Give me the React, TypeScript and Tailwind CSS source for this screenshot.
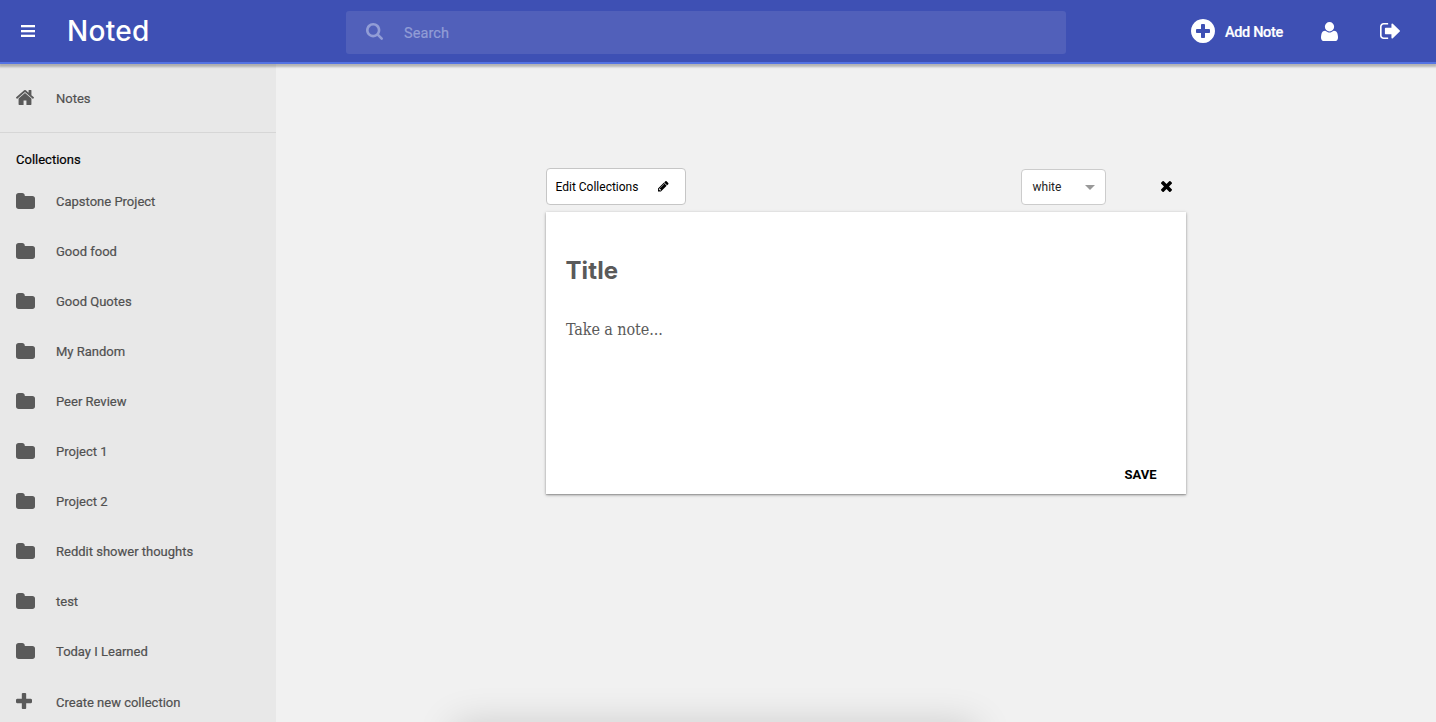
import React from 'react';

type IconProps = { box: string; d: string; className?: string };

function Icon({ box, d, className }: IconProps) {
  return (
    <svg viewBox={box} className={className} fill="currentColor" preserveAspectRatio="none" aria-hidden="true">
      <path d={d} />
    </svg>
  );
}

const icons = {
  home: {
    box: '89 253 1614 1283',
    d: 'M1472 992v480q0 26-19 45t-45 19h-384v-384h-256v384h-384q-26 0-45-19t-19-45v-480q0-1 .5-3t.5-3l575-474 575 474q1 2 1 6zm223-69l-62 74q-8 9-21 11h-3q-13 0-21-7l-692-577-692 577q-12 8-24 7-13-2-21-11l-62-74q-8-10-7-23.5t11-21.5l719-599q32-26 76-26t76 26l244 204v-195q0-14 9-23t23-9h192q14 0 23 9t9 23v408l219 182q10 8 11 21.5t-7 23.5z',
  },
  folder: {
    box: '64 128 1664 1408',
    d: 'M1728 608v704q0 92-66 158t-158 66h-1216q-92 0-158-66t-66-158v-960q0-92 66-158t158-66h320q92 0 158 66t66 158v32h672q92 0 158 66t66 158z',
  },
  plus: {
    box: '192 128 1408 1408',
    d: 'M1600 736v192q0 40-28 68t-68 28h-416v416q0 40-28 68t-68 28h-192q-40 0-68-28t-28-68v-416h-416q-40 0-68-28t-28-68v-192q0-40 28-68t68-28h416v-416q0-40 28-68t68-28h192q40 0 68 28t28 68v416h416q40 0 68 28t28 68z',
  },
  plusCircle: {
    box: '128 128 1536 1536',
    d: 'M1344 960v-128q0-26-19-45t-45-19h-256v-256q0-26-19-45t-45-19h-128q-26 0-45 19t-19 45v256h-256q-26 0-45 19t-19 45v128q0 26 19 45t45 19h256v256q0 26 19 45t45 19h128q26 0 45-19t19-45v-256h256q26 0 45-19t19-45zm320-64q0 209-103 385.5t-279.5 279.5-385.5 103-385.5-103-279.5-279.5-103-385.5 103-385.5 279.5-279.5 385.5-103 385.5 103 279.5 279.5 103 385.5z',
  },
  user: {
    box: '192 128 1408 1536',
    d: 'M1600 1405q0 120-73 189.5t-194 69.5h-874q-121 0-194-69.5t-73-189.5q0-53 3.5-103.5t14-109 26.5-108.5 43-97.5 62-81 85.5-53.5 111.5-20q9 0 42 21.5t74.5 48 108 48 133.5 21.5 133.5-21.5 108-48 74.5-48 42-21.5q61 0 111.5 20t85.5 53.5 62 81 43 97.5 26.5 108.5 14 109 3.5 103.5zm-320-893q0 159-112.5 271.5t-271.5 112.5-271.5-112.5-112.5-271.5 112.5-271.5 271.5-112.5 271.5 112.5 112.5 271.5z',
  },
  signOut: {
    box: '64 256 1568 1280',
    d: 'M704 1440q0 4 1 20t.5 26.5-3 23.5-10 19.5-20.5 6.5h-320q-119 0-203.5-84.5t-84.5-203.5v-704q0-119 84.5-203.5t203.5-84.5h320q13 0 22.5 9.5t9.5 22.5q0 4 1 20t.5 26.5-3 23.5-10 19.5-20.5 6.5h-320q-66 0-113 47t-47 113v704q0 66 47 113t113 47h312l11.5 1 11.5 3 8 5.5 7 9 2 13.5zm928-544q0 26-19 45l-544 544q-19 19-45 19t-45-19-19-45v-288h-448q-26 0-45-19t-19-45v-384q0-26 19-45t45-19h448v-288q0-26 19-45t45-19 45 19l544 544q19 19 19 45z',
  },
  search: {
    box: '64 128 1664 1664',
    d: 'M1216 832q0-185-131.5-316.5t-316.5-131.5-316.5 131.5-131.5 316.5 131.5 316.5 316.5 131.5 316.5-131.5 131.5-316.5zm512 832q0 52-38 90t-90 38q-54 0-90-38l-343-342q-179 124-399 124-143 0-273.5-55.5t-225-150-150-225-55.5-273.5 55.5-273.5 150-225 225-150 273.5-55.5 273.5 55.5 225 150 150 225 55.5 273.5q0 220-124 399l343 343q37 37 37 90z',
  },
  pencil: {
    box: '128 149 1515 1515',
    d: 'M491 1536l91-91-235-235-91 91v107h128v128h107zm523-928q0-22-22-22-10 0-17 7l-542 542q-7 7-7 17 0 22 22 22 10 0 17-7l542-542q7-7 7-17zm-54-192l416 416-832 832h-416v-416zm683 96q0 53-37 90l-166 166-416-416 166-165q36-38 90-38 53 0 91 38l235 234q37 39 37 91z',
  },
  times: {
    box: '302 366 1188 1188',
    d: 'M1490 1322q0 40-28 68l-136 136q-28 28-68 28t-68-28l-294-294-294 294q-28 28-68 28t-68-28l-136-136q-28-28-28-68t28-68l294-294-294-294q-28-28-28-68t28-68l136-136q28-28 68-28t68 28l294 294 294-294q28-28 68-28t68 28l136 136q28 28 28 68t-28 68l-294 294 294 294q28 28 28 68z',
  },
};

const collections = [
  'Capstone Project',
  'Good food',
  'Good Quotes',
  'My Random',
  'Peer Review',
  'Project 1',
  'Project 2',
  'Reddit shower thoughts',
  'test',
  'Today I Learned',
];

function Header() {
  return (
    <header className="relative z-10 flex h-16 shrink-0 items-start border-b-2 border-[#5473e3] bg-[#3e50b4] text-white shadow-[0_2px_2px_1px_rgba(0,0,0,0.25)]">
      <button className="ml-[21px] mt-[25px] flex h-3 w-[14px] flex-col justify-between" aria-label="Menu">
        <span className="h-[2px] w-full bg-white shadow-[0_1px_0_rgba(255,255,255,0.3)]" />
        <span className="h-[2px] w-full bg-white shadow-[0_1px_0_rgba(255,255,255,0.3)]" />
        <span className="h-[2px] w-full bg-white shadow-[0_-1px_0_rgba(255,255,255,0.3)]" />
      </button>
      <h1 className="ml-[31px] mt-[11px] w-[280px] pl-px font-['Inter',sans-serif] text-[28px] font-medium leading-10 tracking-[0.3px]">Noted</h1>
      <div className="mt-[11px] flex h-[43px] w-[720px] items-start rounded-[3px] bg-[#5160ba] text-[#929dd6]">
        <Icon {...icons.search} className="ml-5 mt-3 h-[17px] w-[17px]" />
        <span className="ml-[21px] mt-[13px] text-[14.5px] leading-5 tracking-[0.1px] [-webkit-text-stroke:0.2px]">Search</span>
      </div>
      <button className="ml-[125px] mt-[19px] flex h-6 w-[92px] items-center">
        <Icon {...icons.plusCircle} className="h-6 w-6 shrink-0" />
        <span className="ml-[10px] mt-[3px] whitespace-nowrap text-[14.5px] font-medium leading-5 tracking-[-0.35px] [-webkit-text-stroke:0.2px]">Add Note</span>
      </button>
      <Icon {...icons.user} className="ml-[38px] mt-[22px] h-[19px] w-[17px]" />
      <Icon {...icons.signOut} className="ml-[42px] mt-[23px] h-4 w-5" />
    </header>
  );
}

function Sidebar() {
  return (
    <nav className="flex w-[276px] shrink-0 flex-col bg-[#e8e8e8] text-[13px] text-[#505050] [-webkit-text-stroke:0.2px]">
      <div className="flex h-[69px] shrink-0 items-center border-b border-[#d6d6d6] pl-4">
        <Icon {...icons.home} className="mb-px h-[15px] w-[18px] text-[#5a5a5a]" />
        <span className="ml-[22px] mt-[2px]">Notes</span>
      </div>
      <h2 className="mt-[17px] shrink-0 pl-4 leading-5 text-black">Collections</h2>
      <ul className="mt-[7px]">
        {collections.map((name) => (
          <li key={name} className="flex h-[50px] items-center pl-4">
            <Icon {...icons.folder} className="mb-[2px] h-4 w-[19px] text-[#5a5a5a]" />
            <span className="ml-[21px]">{name}</span>
          </li>
        ))}
        <li className="flex h-[50px] items-center pl-4">
          <Icon {...icons.plus} className="mb-[2px] h-4 w-4 text-[#5a5a5a]" />
          <span className="ml-6 mt-[2px]">Create new collection</span>
        </li>
      </ul>
    </nav>
  );
}

function Editor() {
  return (
    <section className="ml-[270px] mt-[104px] w-[640px]">
      <div className="flex h-[37px] items-center text-xs text-black">
        <button className="flex h-[37px] w-[140px] items-center rounded-[4px] border border-[#c6c6c6] bg-white pl-[8.5px]">
          <span>Edit Collections</span>
          <Icon {...icons.pencil} className="ml-5 h-[10.5px] w-[10.5px]" />
        </button>
        <button className="ml-[335px] mt-px flex h-9 w-[85px] items-center justify-between rounded-[4px] border border-[#cccccc] bg-white pl-[10.5px] pr-[10px] text-[#222]">
          <span>white</span>
          <svg viewBox="0 0 10 5" className="h-[5px] w-[10px]" fill="#999">
            <path d="M0 0h10L5 5z" />
          </svg>
        </button>
        <Icon {...icons.times} className="ml-[55px] h-[11px] w-[11px]" />
      </div>
      <article className="mt-[7px] flex h-[282px] flex-col bg-white px-5 text-[#5a5a5a] shadow-[0_1px_3px_rgba(0,0,0,0.35),0_1px_1px_rgba(0,0,0,0.15)]">
        <h2 className="-ml-[0.5px] mt-11 font-['Inter',sans-serif] text-2xl font-bold leading-[30px] tracking-[0.1px]">Title</h2>
        <p className="mt-8 font-['DejaVu_Serif_Condensed','DejaVu_Serif',serif] text-base leading-6 tracking-[-0.08px] [font-stretch:condensed]">Take a note...</p>
        <button className="ml-auto mr-[9.5px] mt-[123px] text-[13px] font-bold leading-5 text-black">SAVE</button>
      </article>
    </section>
  );
}

export default function App() {
  return (
    <div className="relative flex h-[722px] w-[1436px] flex-col overflow-hidden bg-[#f1f1f1] font-['Roboto',sans-serif]">
      <Header />
      <div className="flex min-h-0 flex-1">
        <Sidebar />
        <main className="flex-1">
          <Editor />
        </main>
      </div>
      <div className="absolute left-[458px] top-[728px] h-10 w-[514px] shadow-[0_0_38px_4px_rgba(0,0,0,0.16)]" />
    </div>
  );
}
